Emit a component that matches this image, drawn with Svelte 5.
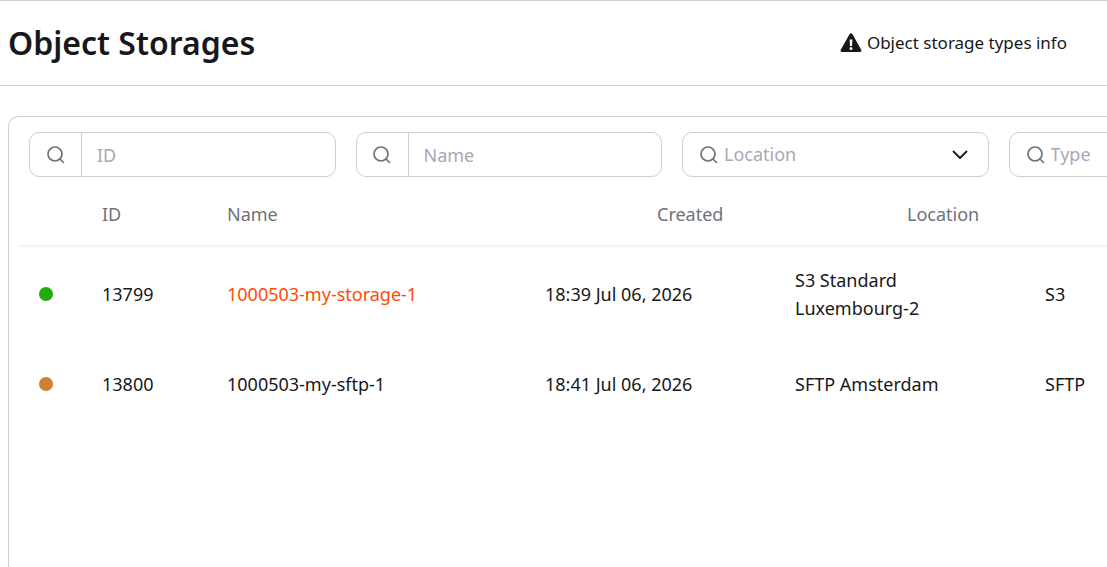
<script lang="ts">
  interface Storage {
    id: number;
    name: string;
    created: string;
    location: string;
    type: string;
    active: boolean;
  }

  const storages: Storage[] = [
    {
      id: 13799,
      name: '1000503-my-storage-1',
      created: '18:39 Jul 06, 2026',
      location: 'S3 Standard Luxembourg-2',
      type: 'S3',
      active: true
    },
    {
      id: 13800,
      name: '1000503-my-sftp-1',
      created: '18:41 Jul 06, 2026',
      location: 'SFTP Amsterdam',
      type: 'SFTP',
      active: false
    }
  ];

  let id = $state('');
  let name = $state('');
  let location = $state('');
  let type = $state('');

  const locations = [...new Set(storages.map((s) => s.location))];
  const types = [...new Set(storages.map((s) => s.type))];

  const visible = $derived(
    storages.filter(
      (s) =>
        String(s.id).includes(id) &&
        s.name.includes(name) &&
        (!location || s.location === location) &&
        (!type || s.type === type)
    )
  );
</script>

{#snippet searchIcon()}
  <svg class="icon" viewBox="0 0 18 18" aria-hidden="true">
    <circle cx="8" cy="8" r="7" />
    <path d="M13 13l3.500 3.500" />
  </svg>
{/snippet}

{#snippet chevron()}
  <svg class="chevron" viewBox="0 0 16 10" aria-hidden="true">
    <path d="M1.500 1.500L8 8l6.500-6.500" />
  </svg>
{/snippet}

<div class="page">
  <header class="page-header">
    <h1>Object Storages</h1>
    <a class="info" href="#types">
      <svg class="warning" viewBox="0 0 22 20" aria-hidden="true">
        <path
          class="triangle"
          d="M9.500 1.200a1.700 1.700 0 0 1 3 0l8.700 15.500c.700 1.300 0 2.300-1.300 2.300H2.100c-1.300 0-2-1-1.300-2.300z"
        />
        <path class="mark" d="M9.600 6.500h2.800l-.4 6.500h-2z" />
        <circle class="mark" cx="11" cy="15.500" r="1.500" />
      </svg>
      Object storage types info
    </a>
  </header>

  <main class="card">
    <form class="filters">
      <div class="field">
        <label class="addon" for="filter-id" aria-label="ID">{@render searchIcon()}</label>
        <input id="filter-id" type="text" placeholder="ID" bind:value={id} />
      </div>
      <div class="field">
        <label class="addon" for="filter-name" aria-label="Name">{@render searchIcon()}</label>
        <input id="filter-name" type="text" placeholder="Name" bind:value={name} />
      </div>
      <div class="field select">
        <label for="filter-location" aria-label="Location">{@render searchIcon()}</label>
        <select id="filter-location" bind:value={location}>
          <option value="">Location</option>
          {#each locations as item}
            <option value={item}>{item}</option>
          {/each}
        </select>
        {@render chevron()}
      </div>
      <div class="field select">
        <label for="filter-type" aria-label="Type">{@render searchIcon()}</label>
        <select id="filter-type" bind:value={type}>
          <option value="">Type</option>
          {#each types as item}
            <option value={item}>{item}</option>
          {/each}
        </select>
        {@render chevron()}
      </div>
    </form>

    <table>
      <colgroup>
        <col class="col-status" />
        <col class="col-id" />
        <col class="col-name" />
        <col class="col-wide" />
        <col class="col-wide" />
        <col />
      </colgroup>
      <thead>
        <tr>
          <th aria-label="Status"></th>
          <th>ID</th>
          <th>Name</th>
          <th class="shifted">Created</th>
          <th class="shifted">Location</th>
          <th aria-label="Type"></th>
        </tr>
      </thead>
      <tbody>
        {#each visible as storage (storage.id)}
          <tr>
            <td><span class="status" class:active={storage.active}></span></td>
            <td>{storage.id}</td>
            <td>
              {#if storage.active}
                <a class="name" href="#{storage.id}">{storage.name}</a>
              {:else}
                {storage.name}
              {/if}
            </td>
            <td>{storage.created}</td>
            <td class="location">{storage.location}</td>
            <td>{storage.type}</td>
          </tr>
        {/each}
      </tbody>
    </table>
  </main>
</div>

<style>
  :global(body) {
    margin: 0;
    background: #fff;
  }

  .page {
    display: flex;
    flex-direction: column;
    box-sizing: border-box;
    height: 100vh;
    overflow: hidden;
    border-top: 1px solid #cfcfd2;
    color: #18181b;
    font-family: 'Noto Sans', sans-serif;
    font-size: 18px;
    line-height: 28px;
  }

  .page-header {
    display: flex;
    align-items: center;
    justify-content: space-between;
    flex: none;
    height: 84px;
    padding: 0 40px 0 8px;
    border-bottom: 1px solid #cfcfd2;
  }

  h1 {
    margin: 0;
    font-size: 32px;
    font-weight: 600;
    line-height: 44px;
  }

  .info {
    display: flex;
    align-items: center;
    gap: 5px;
    color: inherit;
    font-size: 17px;
    text-decoration: none;
  }

  .warning {
    width: 22px;
    height: 20px;
  }

  .triangle {
    fill: #18181b;
  }

  .mark {
    fill: #fff;
  }

  .card {
    box-sizing: border-box;
    flex: 1;
    min-width: 1328px;
    margin: 30px 0 0 8px;
    padding: 15px 10px;
    border: 1px solid #cfcfd2;
    border-bottom: 0;
    border-radius: 10px 10px 0 0;
  }

  .filters {
    display: grid;
    grid-template-columns: repeat(4, minmax(0, 1fr));
    gap: 20px;
    padding: 0 10px;
  }

  .field {
    display: flex;
    align-items: center;
    box-sizing: border-box;
    height: 45px;
    border: 1px solid #cfcfd2;
    border-radius: 10px;
  }

  .field label {
    display: flex;
    align-items: center;
    justify-content: center;
  }

  .addon {
    flex: none;
    width: 51px;
    height: 100%;
    border-right: 1px solid #cfcfd2;
  }

  .icon {
    width: 18px;
    height: 18px;
    fill: none;
    stroke: #71717a;
    stroke-width: 1.7;
    stroke-linecap: round;
  }

  input,
  select {
    flex: 1;
    min-width: 0;
    height: 100%;
    border: 0;
    outline: 0;
    background: transparent;
    font: inherit;
  }

  input {
    padding: 0 15px;
    color: inherit;
  }

  input::placeholder {
    color: #a9a7b4;
    opacity: 1;
  }

  .select {
    padding: 0 20px 0 17px;
  }

  select {
    padding: 0 0 2px 6px;
    color: #a9a7b4;
    appearance: none;
  }

  .chevron {
    width: 16px;
    height: 10px;
    fill: none;
    stroke: #18181b;
    stroke-width: 1.8;
    stroke-linecap: round;
    stroke-linejoin: round;
    pointer-events: none;
  }

  table {
    width: 100%;
    margin-top: 5px;
    border-collapse: collapse;
    table-layout: fixed;
  }

  .col-status {
    width: 63px;
  }

  .col-id {
    width: 125px;
  }

  .col-name {
    width: 318px;
  }

  .col-wide {
    width: 250px;
  }

  th {
    height: 63px;
    padding: 0 20px;
    border-bottom: 2px solid #f4f4f5;
    color: #71717a;
    font-weight: 400;
    text-align: left;
  }

  th.shifted {
    padding-left: 132px;
    padding-right: 0;
  }

  td {
    box-sizing: border-box;
    height: 84px;
    padding: 19px 20px 21px;
  }

  .location {
    padding-right: 40px;
  }

  .status {
    display: block;
    width: 14px;
    height: 14px;
    border-radius: 50%;
    background: #d08032;
  }

  .status.active {
    background: #22ab0d;
  }

  .name {
    color: #ff4c00;
    text-decoration: none;
  }
</style>
